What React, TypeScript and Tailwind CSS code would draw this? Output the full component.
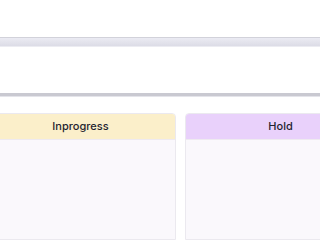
import React from "react";

export default function App() {
  return (
    <div className="w-[320px] h-[240px] overflow-hidden bg-white" style={{ fontFamily: "Inter, 'Noto Sans', sans-serif" }}>
      <div className="h-[37px]" />
      <div className="h-[10px] border-t border-[#d2d2da] border-b border-b-[#ececf2] bg-gradient-to-b from-[#ebebf3] to-[#dcdce6]" />
      <div className="h-[46px]" />
      <div className="h-[4px] bg-[#c9c9d1] border-b border-[#e4e4ea]" />
      <div className="h-[16px]" />
      <div className="flex gap-[9px] ml-[-15px] h-[127px]">
        {[
          { t: "Inprogress", bg: "bg-[#fbefca]" },
          { t: "Hold", bg: "bg-[#e9d1fb]" },
        ].map((c) => (
          <div key={c.t} className="w-[191px] shrink-0 flex flex-col border border-[#ebe9ef] rounded-t-[4px] overflow-hidden">
            <div className={`h-[26px] shrink-0 flex items-center justify-center text-[11px] font-medium text-[#1f2430] border-b border-[#eeeaf0] ${c.bg}`}>
              {c.t}
            </div>
            <div className="flex-1 bg-[#faf8fc]" />
          </div>
        ))}
      </div>
    </div>
  );
}
